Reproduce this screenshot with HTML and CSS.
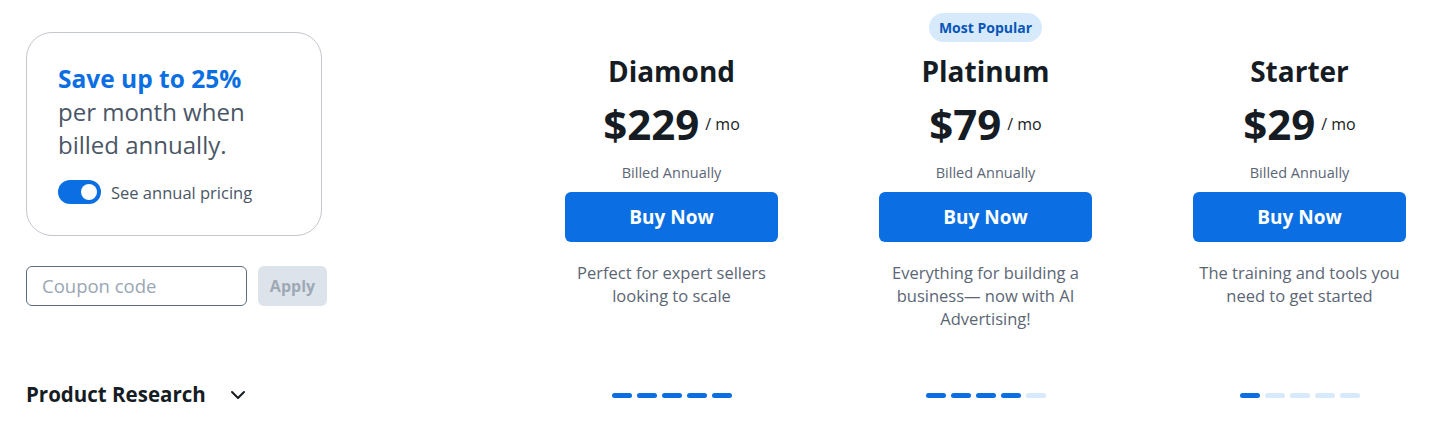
FILE: index.html
```html
<!DOCTYPE html>
<html>
<head>
<meta charset="utf-8">
<link rel="stylesheet" href="styles.css">
</head>
<body>
<div class="page">
  <div class="left">
    <div class="save-card">
      <div class="save-title">Save up to 25%</div>
      <div class="save-sub">per month when billed annually.</div>
      <div class="toggle-row">
        <span class="toggle"><span class="knob"></span></span>
        <span class="toggle-label">See annual pricing</span>
      </div>
    </div>
    <div class="coupon-row">
      <div class="coupon-input">Coupon code</div>
      <div class="apply-btn">Apply</div>
    </div>
    <div class="section-title">
      <span>Product Research</span>
      <svg class="chev" width="16" height="10" viewBox="0 0 16 10"><path d="M2 2 L8 8 L14 2" fill="none" stroke="#161c24" stroke-width="2" stroke-linecap="round" stroke-linejoin="round"/></svg>
    </div>
  </div>
  <div class="plans">
    <div class="plan">
      <div class="badge-slot"></div>
      <div class="plan-name">Diamond</div>
      <div class="price"><span class="amount">$229</span><span class="per">/ mo</span></div>
      <div class="billed">Billed Annually</div>
      <div class="buy">Buy Now</div>
      <div class="desc">Perfect for expert sellers looking to scale</div>
      <div class="dashes"><i class="on"></i><i class="on"></i><i class="on"></i><i class="on"></i><i class="on"></i></div>
    </div>
    <div class="plan">
      <div class="badge-slot"><span class="badge">Most Popular</span></div>
      <div class="plan-name">Platinum</div>
      <div class="price"><span class="amount">$79</span><span class="per">/ mo</span></div>
      <div class="billed">Billed Annually</div>
      <div class="buy">Buy Now</div>
      <div class="desc">Everything for building a business— now with AI Advertising!</div>
      <div class="dashes"><i class="on"></i><i class="on"></i><i class="on"></i><i class="on"></i><i></i></div>
    </div>
    <div class="plan">
      <div class="badge-slot"></div>
      <div class="plan-name">Starter</div>
      <div class="price"><span class="amount">$29</span><span class="per">/ mo</span></div>
      <div class="billed">Billed Annually</div>
      <div class="buy">Buy Now</div>
      <div class="desc">The training and tools you need to get started</div>
      <div class="dashes"><i class="on"></i><i></i><i></i><i></i><i></i></div>
    </div>
  </div>
</div>
</body>
</html>
```
FILE: styles.css
```css
* { box-sizing: border-box; }
html, body { margin: 0; padding: 0; background: #fff; }
body {
  font-family: "Open Sans", Lato, sans-serif;
  color: #161c24;
  width: 1436px;
  height: 428px;
  overflow: hidden;
}
.page {
  display: flex;
  padding: 0 0 0 26px;
}
.left {
  width: 302px;
  padding-top: 32px;
  display: flex;
  flex-direction: column;
}
.save-card {
  width: 296px;
  height: 204px;
  border: 1px solid #c3c7ce;
  border-radius: 26px;
  padding: 29px 10px 0 31px;
}
.save-title {
  color: #0b6fe3;
  font-weight: 700;
  font-size: 24.5px;
  line-height: 33px;
  white-space: nowrap;
}
.save-sub {
  color: #4a5666;
  font-size: 24px;
  line-height: 33px;
  width: 220px;
}
.toggle-row {
  display: flex;
  align-items: center;
  gap: 10px;
  margin-top: 19px;
}
.toggle {
  width: 43px;
  height: 24px;
  border-radius: 12px;
  background: #0b6fe3;
  position: relative;
  display: block;
}
.knob {
  position: absolute;
  right: 4px;
  top: 4px;
  width: 16px;
  height: 16px;
  border-radius: 50%;
  background: #fff;
}
.toggle-label {
  font-size: 16.5px;
  color: #4a5666;
}
.coupon-row {
  display: flex;
  gap: 11px;
  margin-top: 30px;
}
.coupon-input {
  width: 221px;
  height: 40px;
  border: 1px solid #5d6d80;
  border-radius: 6px;
  padding: 0 15px;
  font-size: 18.5px;
  line-height: 38px;
  color: #9aa6b4;
}
.apply-btn {
  width: 69px;
  height: 40px;
  border-radius: 6px;
  background: #dde3ea;
  color: #9ea9b5;
  font-weight: 700;
  font-size: 16px;
  line-height: 40px;
  text-align: center;
}
.section-title {
  margin-top: 75px;
  display: flex;
  align-items: center;
  gap: 24px;
  font-size: 20.5px;
  font-weight: 700;
  line-height: 26px;
}
.chev { margin-top: 2px; }
.plans {
  display: grid;
  grid-template-columns: repeat(3, 213px);
  column-gap: 101px;
  margin-left: 237px;
}
.plan {
  display: flex;
  flex-direction: column;
  align-items: center;
  text-align: center;
}
.badge-slot {
  height: 42px;
  padding-top: 13px;
}
.badge {
  display: inline-block;
  background: #d6eafc;
  color: #0a56b6;
  font-weight: 700;
  font-size: 14px;
  height: 29px;
  line-height: 29px;
  padding: 0 10px;
  border-radius: 15px;
}
.plan-name {
  font-size: 28px;
  font-weight: 700;
  line-height: 36px;
  margin-top: 11px;
}
.price {
  display: flex;
  align-items: flex-start;
  margin-top: 10px;
  height: 50px;
}
.amount {
  font-size: 42px;
  font-weight: 700;
  line-height: 50px;
}
.per {
  font-size: 16px;
  margin-left: 6px;
  margin-top: 14px;
}
.billed {
  font-size: 14.5px;
  color: #5b6675;
  margin-top: 14px;
  line-height: 20px;
}
.buy {
  width: 213px;
  height: 50px;
  margin-top: 9px;
  background: #0b6fe3;
  border-radius: 6px;
  color: #fff;
  font-weight: 700;
  font-size: 19px;
  line-height: 50px;
}
.desc {
  font-size: 16.5px;
  line-height: 23px;
  color: #5b6675;
  margin-top: 19px;
  width: 214px;
  height: 132px;
}
.dashes {
  display: flex;
  gap: 5px;
}
.dashes i {
  display: block;
  width: 20px;
  height: 5px;
  border-radius: 3px;
  background: #d6eafc;
}
.dashes i.on { background: #0b6fe3; }
```
